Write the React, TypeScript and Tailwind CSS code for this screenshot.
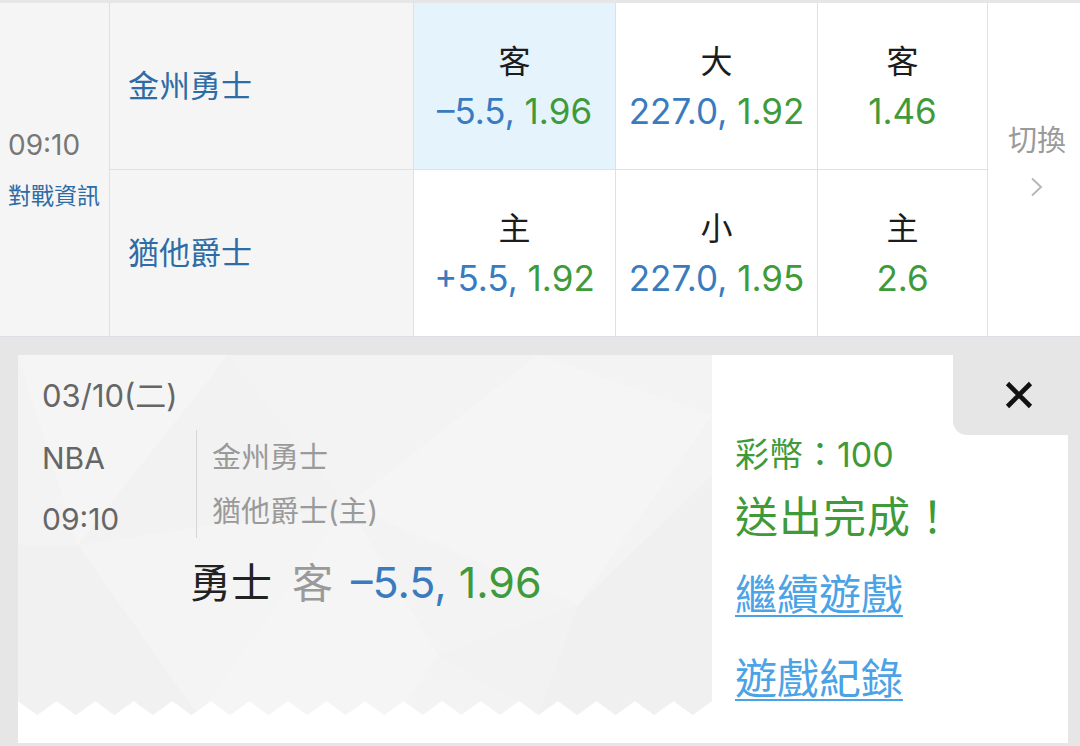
import React from "react";

const BORDER = "border-[#dde0e5]";

function OddsCell({
  label,
  line,
  price,
  active,
}: {
  label: string;
  line?: string;
  price: string;
  active?: boolean;
}) {
  return (
    <div
      className={`flex flex-col items-center justify-center gap-[7px] border-r border-b ${BORDER} ${
        active ? "bg-[#e5f3fd]" : "bg-white"
      }`}
    >
      <span className="text-[32px] leading-[42px] text-[#1c1c1c]">{label}</span>
      <span className="text-[35px] leading-[42px]">
        {line && <span className="text-[#3a7bbf]">{line}, </span>}
        <span className="text-[#3f9a3a]">{price}</span>
      </span>
    </div>
  );
}

function TeamCell({ name }: { name: string }) {
  return (
    <div className={`flex items-center border-r border-b ${BORDER} bg-[#f5f5f5] pl-[18px]`}>
      <span className="text-[31px] leading-[40px] text-[#2e6ca5]">{name}</span>
    </div>
  );
}

function Pattern() {
  const tooth = 694 / 18;
  const zig = Array.from({ length: 18 }, (_, i) => 17 - i)
    .map((k) => `L${(k * tooth + tooth / 2).toFixed(1)},360 L${(k * tooth).toFixed(1)},346`)
    .join(" ");
  const area = `M0,0 L694,0 L694,346 ${zig} Z`;
  return (
    <svg className="absolute inset-0 h-full w-full" viewBox="0 0 694 388" preserveAspectRatio="none">
      <defs>
        <clipPath id="ticket">
          <path d={area} />
        </clipPath>
      </defs>
      <rect width="694" height="388" fill="#ffffff" />
      <path d={area} fill="#f3f3f3" />
      <g clipPath="url(#ticket)">
        <polygon points="0,0 210,0 60,190" fill="#f5f5f5" />
        <polygon points="60,190 210,0 330,150" fill="#f2f2f2" />
        <polygon points="330,150 520,0 694,60 560,250" fill="#f5f5f5" />
        <polygon points="0,190 60,190 180,360 0,360" fill="#f1f1f1" />
        <polygon points="180,360 330,150 420,300 380,360" fill="#f5f5f5" />
        <polygon points="560,250 694,120 694,360 520,360" fill="#f0f0f0" />
        <polygon points="420,300 560,250 520,360" fill="#f2f2f2" />
        <polygon points="60,190 330,150 180,360" fill="#f4f4f4" />
      </g>
    </svg>
  );
}

export default function App() {
  return (
    <div className="h-[746px] w-[1080px] overflow-hidden bg-[#e6e6e6] font-[family-name:Inter,'Noto_Sans_CJK_TC',sans-serif]">
      {/* match row */}
      <div className="grid h-[337px] grid-flow-col grid-cols-[110px_304px_202px_202px_170px_92px] grid-rows-[167px_167px] border-t-[3px] border-[#e6e6e6] bg-white">
        <div
          className={`row-span-2 flex flex-col justify-center border-r border-b ${BORDER} bg-[#f5f5f5] pl-[8px]`}
        >
          <span className="text-[28px] leading-[34px] text-[#777777]">09:10</span>
          <span className="mt-[19px] text-[23px] leading-[30px] text-[#2e6ca5]">對戰資訊</span>
        </div>
        <TeamCell name="金州勇士" />
        <TeamCell name="猶他爵士" />
        <OddsCell label="客" line="–5.5" price="1.96" active />
        <OddsCell label="主" line="+5.5" price="1.92" />
        <OddsCell label="大" line="227.0" price="1.92" />
        <OddsCell label="小" line="227.0" price="1.95" />
        <OddsCell label="客" price="1.46" />
        <OddsCell label="主" price="2.6" />
        <div
          className={`row-span-2 flex flex-col items-center justify-center border-b ${BORDER} bg-white pb-[20px] pl-[6px]`}
        >
          <span className="text-[29px] leading-[36px] text-[#9a9a9a]">切換</span>
          <svg className="mt-[18px]" width="14" height="20" viewBox="0 0 14 20" fill="none">
            <path d="M2 1.5 L11 10 L2 18.5" stroke="#b8b8b8" strokeWidth="2" />
          </svg>
        </div>
      </div>

      {/* bet slip */}
      <div className="flex h-[409px] pt-[18px] pr-[12px] pb-[3px] pl-[18px]">
        <div className="flex flex-1">
          <div className="relative w-[694px]">
            <Pattern />
            <div className="relative flex flex-col pt-[22px] pl-[24px]">
              <span className="text-[31px] leading-[38px] text-[#666666]">03/10(二)</span>
              <div className="mt-[15px] flex h-[108px]">
                <div className="flex w-[154px] flex-col gap-[25px] pt-[10px]">
                  <span className="text-[30px] leading-[36px] text-[#666666]">NBA</span>
                  <span className="text-[30px] leading-[36px] text-[#666666]">09:10</span>
                </div>
                <div className="flex flex-col gap-[18px] border-l border-[#d6d6d6] pt-[10px] pl-[15px]">
                  <span className="text-[29px] leading-[36px] text-[#9a9a9a]">金州勇士</span>
                  <span className="text-[29px] leading-[36px] text-[#9a9a9a]">猶他爵士(主)</span>
                </div>
              </div>
              <div className="mt-[21px] ml-[148px] flex items-baseline text-[41px] leading-[46px]">
                <span className="mr-[20px] text-[#222222]">勇士</span>
                <span className="mr-[18px] text-[#9a9a9a]">客</span>
                <span className="text-[43px] text-[#3a7bbf]">–5.5,&nbsp;</span>
                <span className="text-[43px] text-[#3f9a3a]">1.96</span>
              </div>
            </div>
          </div>

          <div className="flex flex-1 flex-col bg-white">
            <div className="flex">
              <div className="flex-1" />
              <button className="flex h-[80px] w-[115px] items-center justify-center rounded-bl-[14px] bg-[#e6e6e6] pl-[16px]">
                <svg width="30" height="30" viewBox="0 0 30 30" fill="none">
                  <path d="M3.5 3.5 L26.5 26.5 M26.5 3.5 L3.5 26.5" stroke="#111111" strokeWidth="4.6" />
                </svg>
              </button>
            </div>
            <div className="flex flex-col items-start pl-[23px]">
              <span className="text-[34px] leading-[40px] text-[#3f9a3a]">彩幣：100</span>
              <span className="mt-[17px] text-[43px] leading-[50px] tracking-[1px] text-[#3f9a3a]">送出完成！</span>
              <a className="mt-[28px] text-[42px] leading-[50px] text-[#4ba3e6] underline decoration-2 underline-offset-[5px]">
                繼續遊戲
              </a>
              <a className="mt-[34px] text-[42px] leading-[50px] text-[#4ba3e6] underline decoration-2 underline-offset-[5px]">
                遊戲紀錄
              </a>
            </div>
          </div>
        </div>
      </div>
    </div>
  );
}
